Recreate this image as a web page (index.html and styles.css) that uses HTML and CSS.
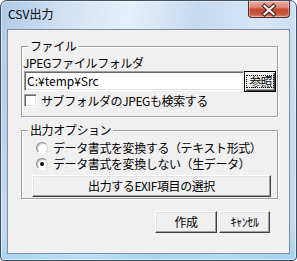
FILE: index.html
```html
<!DOCTYPE html>
<html lang="ja">
<head>
<meta charset="utf-8">
<link rel="stylesheet" href="styles.css">
</head>
<body>
<div class="win">
  <div class="titlebar">
    <span class="title">CSV出力</span>
    <span class="close">
      <svg width="42" height="17" viewBox="0 0 42 17">
        <path d="M16.5 5 L25.5 13 M25.5 5 L16.5 13" stroke="#4a1c14" stroke-width="4.2" stroke-linecap="square" fill="none"/>
        <path d="M16.5 5 L25.5 13 M25.5 5 L16.5 13" stroke="#ffffff" stroke-width="2.2" stroke-linecap="square" fill="none"/>
      </svg>
    </span>
  </div>
  <div class="client">
    <fieldset class="group g1">
      <legend>ファイル</legend>
      <div class="label">JPEGファイルフォルダ</div>
      <div class="pathrow">
        <div class="input">C:¥temp¥Src</div>
        <div class="btn default"><span class="focus">参照</span></div>
      </div>
      <div class="check"><span class="cbox"></span><span class="ctext">サブフォルダのJPEGも検索する</span></div>
    </fieldset>
    <fieldset class="group g2">
      <legend>出力オプション</legend>
      <div class="radio"><span class="rdot"></span><span class="rtext">データ書式を変換する（テキスト形式）</span></div>
      <div class="radio"><span class="rdot on"></span><span class="rtext">データ書式を変換しない（生データ）</span></div>
      <div class="btn exif">出力するEXIF項目の選択</div>
    </fieldset>
    <div class="actions">
      <div class="btn ok">作成</div>
      <div class="btn cancel">ｷｬﾝｾﾙ</div>
    </div>
  </div>
</div>
</body>
</html>
```
FILE: styles.css
```css
* { box-sizing: border-box; }
html, body { margin: 0; background: #ffffff; }
body {
  font-family: "Noto Sans CJK JP", "Noto Sans", sans-serif;
  font-size: 12px;
  line-height: 12px;
  color: #000;
}
.win {
  width: 297px;
  height: 261px;
  border: 1px solid #3f4f63;
  border-radius: 7px 7px 4px 4px;
  padding: 0 6px 6px;
  display: flex;
  flex-direction: column;
  background:
    linear-gradient(180deg, rgba(255,255,255,0) 88%, rgba(140,205,242,.55) 100%),
    linear-gradient(100deg, #aecae6 0%, #cfe0f2 18%, #e6f0fa 38%, #c6daef 58%, #d6e6f6 78%, #bed6ee 100%);
  box-shadow: inset 0 0 0 1px rgba(255,255,255,.55);
  overflow: hidden;
}
.titlebar {
  height: 28px;
  display: flex;
  justify-content: space-between;
  align-items: flex-start;
  flex: none;
}
.title {
  margin: 6px 0 0 1px;
  line-height: 14px;
  font-size: 12px;
  color: #000;
}
.close {
  width: 42px;
  height: 17px;
  border: 1px solid #5a2a22;
  border-top: none;
  border-radius: 0 0 4px 4px;
  background: linear-gradient(180deg, #eab0a4 0%, #dc8472 40%, #c44a33 52%, #c2553c 80%, #d9896f 100%);
  box-shadow: inset 0 0 0 1px rgba(255,255,255,.35);
  display: flex;
  position: relative;
}
.close svg { position: absolute; left: -1px; top: 0; }
.client {
  flex: 1;
  border: 1px solid #7d8fa5;
  background: #f0f0f0;
  padding: 10px 11px 0 13px;
  display: flex;
  flex-direction: column;
  letter-spacing: -0.4px;
}
.group {
  margin: 0;
  min-width: 0;
  border: 1px solid #a0a0a0;
  box-shadow: inset 1px 1px 0 #ffffff, 1px 1px 0 #ffffff;
  padding: 5px 0 9px 1px;
}
.group legend {
  padding: 0 2px;
  margin-left: 5px;
  line-height: 12px;
  background: #f0f0f0;
}
.label { line-height: 12px; }
.pathrow {
  display: flex;
  margin: 2px 0 0 1px;
  height: 21px;
}
.input {
  width: 220px;
  height: 20px;
  background: #ffffff;
  border: 1px solid;
  border-color: #a0a0a0 #ffffff #ffffff #a0a0a0;
  box-shadow: inset 1px 1px 0 #696969, inset -1px -1px 0 #e3e3e3;
  padding-left: 2px;
  display: flex;
  align-items: center;
  letter-spacing: 0;
}
.btn {
  background: #f0f0f0;
  border: 1px solid;
  border-color: #ffffff #404040 #404040 #ffffff;
  box-shadow: inset -1px -1px 0 #a0a0a0, inset 1px 1px 0 #e3e3e3;
  display: flex;
  align-items: center;
  justify-content: center;
  line-height: 12px;
}
.btn.default {
  width: 32px;
  height: 21px;
  border-color: #000;
  box-shadow: inset 1px 1px 0 #ffffff, inset -1px -1px 0 #404040, inset -2px -2px 0 #a0a0a0;
}
.focus {
  border: 1px dotted #000;
  padding: 0 1px 0 2px;
  line-height: 11px;
  letter-spacing: -1px;
}
.check {
  display: flex;
  align-items: center;
  margin: 2px 0 0 1px;
  height: 13px;
}
.cbox {
  width: 13px;
  height: 13px;
  background: #ffffff;
  border: 1px solid;
  border-color: #a0a0a0 #ffffff #ffffff #a0a0a0;
  box-shadow: inset 1px 1px 0 #696969, inset -1px -1px 0 #e3e3e3;
  flex: none;
}
.ctext { margin-left: 4px; }
.g2 { margin-top: 7px; padding: 4px 0 1px 1px; }
.radio {
  display: flex;
  align-items: center;
  height: 16px;
  margin-left: 13px;
}
.rdot {
  width: 12px;
  height: 12px;
  border-radius: 50%;
  flex: none;
  background: radial-gradient(circle at 60% 60%, #ffffff 40%, #e8e8e8 100%);
  border: 1px solid;
  border-color: #8a8a8a #d8d8d8 #ffffff #8a8a8a;
  box-shadow: inset 1px 1px 0 #c8c8c8;
  display: flex;
  align-items: center;
  justify-content: center;
}
.rdot.on::after {
  content: "";
  width: 4px;
  height: 4px;
  border-radius: 50%;
  background: #111;
}
.rtext { margin-left: 5px; }
.btn.exif {
  margin: 3px 0 0 9px;
  width: 239px;
  height: 22px;
}
.actions {
  display: flex;
  justify-content: flex-end;
  gap: 2px;
  margin-top: 12px;
  padding-right: 8px;
}
.btn.ok { width: 62px; height: 22px; }
.btn.cancel { width: 51px; height: 22px; }
```
